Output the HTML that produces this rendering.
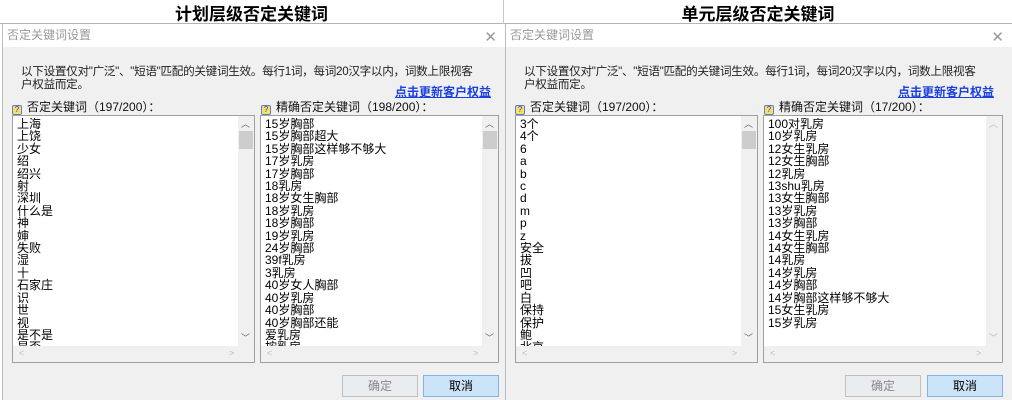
<!DOCTYPE html>
<html><head><meta charset="utf-8"><style>
*{margin:0;padding:0;box-sizing:border-box}
body{width:1012px;height:400px;background:#fff;position:relative;overflow:hidden;font-family:"Liberation Sans","Noto Sans CJK SC",sans-serif;font-size:12px;color:#000}
.h{position:absolute;top:0;height:24px;line-height:26px;text-align:center;font-size:17px;font-weight:bold;font-family:"Noto Sans CJK SC",sans-serif}
.vl{position:absolute;left:503px;top:0;width:1px;height:400px;background:#c8c8c8}
.hl{position:absolute;left:0;top:23px;width:1012px;height:1px;background:#b4b4b4}
.d{position:absolute;top:24px;width:503px;height:376px;background:#f0f0f0;border-left:1px solid #bbb}
.tb{position:absolute;left:0;top:0;right:0;height:23px;background:#fff;color:#999;line-height:22px;padding-left:4px;font-size:12px}
.x{position:absolute;right:8px;top:3px;color:#999;font-size:15px}
.desc{position:absolute;left:18px;top:41px;white-space:nowrap;line-height:13px;color:#222;font-size:11.6px;letter-spacing:-0.3px}
.lk{position:absolute;left:392px;top:59px;color:#1a3fe0;text-decoration:underline;font-weight:bold}
.lb{position:absolute;top:74px;color:#111}
.q{display:inline-block;width:10px;height:10px;background:#f7df6a;border:1px solid #5a7fd0;border-radius:2px;font-size:8px;line-height:8px;text-align:center;color:#33a;margin-right:5px;vertical-align:-1px}
.box{position:absolute;top:91px;height:248px;background:#fff;border:1px solid #a0a0a0}
.lst{position:absolute;left:4px;top:2px;line-height:12.4px;white-space:pre;overflow:hidden;height:228px}
.vs{position:absolute;right:0;top:0;width:16px;bottom:16px;background:#f0f0f0}
.th{position:absolute;left:1px;right:1px;top:15px;height:18px;background:#cdcdcd}
.hs{position:absolute;left:0;right:0;bottom:0;height:16px;background:#f0f0f0;color:#bbb;font-size:9px}
.ar{position:absolute;left:3px;font-size:9px;color:#666}
.btn{position:absolute;top:351px;width:76px;height:22px;line-height:20px;text-align:center;border:1px solid #adadad}
</style></head><body>
<div class="h" style="left:0;width:503px">计划层级否定关键词</div>
<div class="h" style="left:504px;width:508px">单元层级否定关键词</div>
<div class="hl"></div><div class="vl"></div>

<div class="d" style="left:2px">
<div class="tb">否定关键词设置<span class="x">✕</span></div>
<div class="desc">以下设置仅对"广泛"、"短语"匹配的关键词生效。每行1词，每词20汉字以内，词数上限视客<br>户权益而定。</div>
<div class="lk">点击更新客户权益</div>
<div class="lb" style="left:9px"><span class="q">?</span>否定关键词（197/200）：</div>
<div class="lb" style="left:258px"><span class="q">?</span>精确否定关键词（198/200）：</div>
<div class="box" style="left:9px;width:243px"><div class="lst">上海
上饶
少女
绍
绍兴
射
深圳
什么是
神
婶
失败
湿
十
石家庄
识
世
视
是不是
是否</div><div class="vs"><span class="ar" style="top:1px">︿</span><div class="th"></div><span class="ar" style="bottom:2px">﹀</span></div><div class="hs"><span style="position:absolute;left:6px;top:2px">&lt;</span><span style="position:absolute;left:216px;top:2px">&gt;</span></div></div>
<div class="box" style="left:257px;width:239px"><div class="lst">15岁胸部
15岁胸部超大
15岁胸部这样够不够大
17岁乳房
17岁胸部
18乳房
18岁女生胸部
18岁乳房
18岁胸部
19岁乳房
24岁胸部
39f乳房
3乳房
40岁女人胸部
40岁乳房
40岁胸部
40岁胸部还能
爱乳房
按乳房</div><div class="vs"><span class="ar" style="top:1px">︿</span><div class="th"></div><span class="ar" style="bottom:2px">﹀</span></div><div class="hs"><span style="position:absolute;left:6px;top:2px">&lt;</span><span style="position:absolute;left:212px;top:2px">&gt;</span></div></div>
<div class="btn" style="left:339px;background:#e9edf0;color:#888;border-color:#bfbfbf">确定</div>
<div class="btn" style="left:420px;background:#cce4f7;border-color:#7eb4ea">取消</div>
</div>

<div class="d" style="left:505px;width:507px">
<div class="tb">否定关键词设置<span class="x">✕</span></div>
<div class="desc">以下设置仅对"广泛"、"短语"匹配的关键词生效。每行1词，每词20汉字以内，词数上限视客<br>户权益而定。</div>
<div class="lk">点击更新客户权益</div>
<div class="lb" style="left:9px"><span class="q">?</span>否定关键词（197/200）：</div>
<div class="lb" style="left:258px"><span class="q">?</span>精确否定关键词（17/200）：</div>
<div class="box" style="left:9px;width:243px"><div class="lst">3个
4个
6
a
b
c
d
m
p
z
安全
拔
凹
吧
白
保持
保护
鲍
北京</div><div class="vs"><span class="ar" style="top:1px">︿</span><div class="th"></div><span class="ar" style="bottom:2px">﹀</span></div><div class="hs"><span style="position:absolute;left:6px;top:2px">&lt;</span><span style="position:absolute;left:216px;top:2px">&gt;</span></div></div>
<div class="box" style="left:257px;width:240px"><div class="lst">100对乳房
10岁乳房
12女生乳房
12女生胸部
12乳房
13shu乳房
13女生胸部
13岁乳房
13岁胸部
14女生乳房
14女生胸部
14乳房
14岁乳房
14岁胸部
14岁胸部这样够不够大
15女生乳房
15岁乳房</div><div class="vs" style="color:#bbb"><span class="ar" style="top:1px;color:#bbb">︿</span><span class="ar" style="bottom:2px;color:#bbb">﹀</span></div><div class="hs"><span style="position:absolute;left:6px;top:2px">&lt;</span><span style="position:absolute;left:212px;top:2px">&gt;</span></div></div>
<div class="btn" style="left:339px;background:#e9edf0;color:#888;border-color:#bfbfbf">确定</div>
<div class="btn" style="left:421px;background:#cce4f7;border-color:#7eb4ea">取消</div>
</div>
</body></html>
